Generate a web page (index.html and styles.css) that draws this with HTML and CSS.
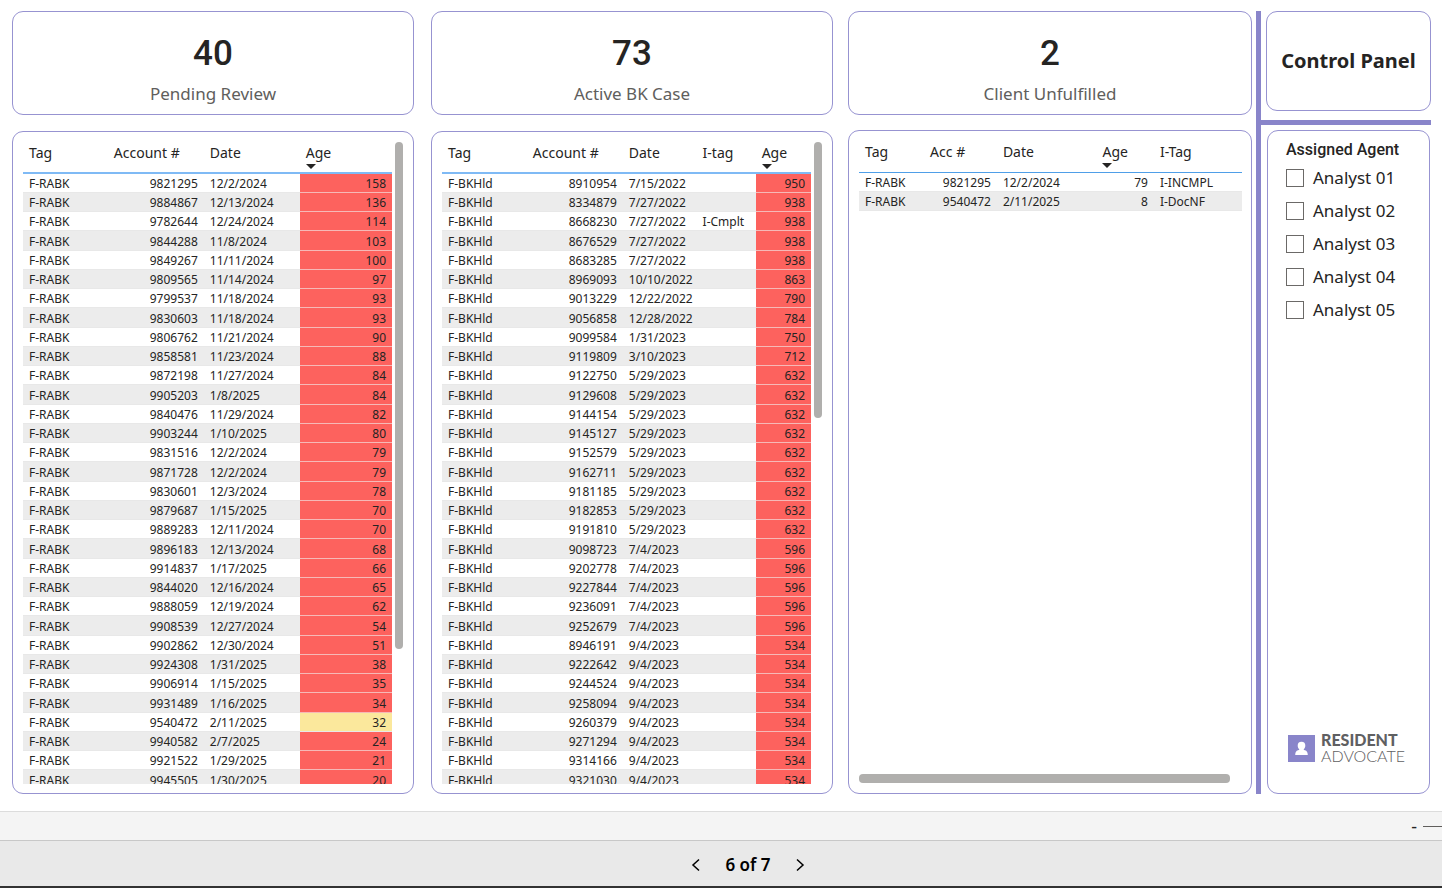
FILE: index.html
```html
<!DOCTYPE html>
<html lang="en">
<head>
<meta charset="utf-8">
<title>Resident Advocate – BK Review</title>
<link rel="stylesheet" href="styles.css">
</head>
<body>
<main class="report">
  <section class="column">
    <div class="card kpi"><div class="kpi-value">40</div><div class="kpi-label">Pending Review</div></div>
    <div class="card panel">
      <div class="table-wrap">
        <table class="grid pending">
          <colgroup><col class="c-tag"><col class="c-acc"><col class="c-date"><col class="c-age"></colgroup>
          <thead><tr><th>Tag</th><th>Account #</th><th>Date</th><th class="sorted">Age</th></tr></thead>
          <tbody id="pending"></tbody>
        </table>
      </div>
      <div class="vscroll"><div class="thumb thumb-long"></div></div>
    </div>
  </section>
  <section class="column">
    <div class="card kpi"><div class="kpi-value">73</div><div class="kpi-label">Active BK Case</div></div>
    <div class="card panel">
      <div class="table-wrap">
        <table class="grid active">
          <colgroup><col class="c-tag"><col class="c-acc"><col class="c-date"><col class="c-itag"><col class="c-age"></colgroup>
          <thead><tr><th>Tag</th><th>Account #</th><th>Date</th><th>I-tag</th><th class="sorted">Age</th></tr></thead>
          <tbody id="active"></tbody>
        </table>
      </div>
      <div class="vscroll"><div class="thumb thumb-short"></div></div>
    </div>
  </section>
  <section class="column">
    <div class="card kpi"><div class="kpi-value">2</div><div class="kpi-label">Client Unfulfilled</div></div>
    <div class="card panel panel-wide">
      <div class="table-wrap">
        <table class="grid client">
          <colgroup><col class="c-tag"><col class="c-acc"><col class="c-date"><col class="c-age"><col class="c-itag"></colgroup>
          <thead><tr><th>Tag</th><th>Acc #</th><th>Date</th><th class="sorted">Age</th><th>I-Tag</th></tr></thead>
          <tbody>
            <tr><td>F-RABK</td><td class="num">9821295</td><td>12/2/2024</td><td class="num">79</td><td>I-INCMPL</td></tr>
            <tr><td>F-RABK</td><td class="num">9540472</td><td>2/11/2025</td><td class="num">8</td><td>I-DocNF</td></tr>
          </tbody>
        </table>
      </div>
      <div class="hscroll"></div>
    </div>
  </section>
  <aside class="sidebar">
    <div class="card title-card"><h1>Control Panel</h1></div>
    <div class="rule"></div>
    <div class="card filters">
      <fieldset>
        <legend>Assigned Agent</legend>
        <label><input type="checkbox">Analyst 01</label>
        <label><input type="checkbox">Analyst 02</label>
        <label><input type="checkbox">Analyst 03</label>
        <label><input type="checkbox">Analyst 04</label>
        <label><input type="checkbox">Analyst 05</label>
      </fieldset>
      <div class="logo">
        <svg width="27" height="27" viewBox="0 0 27 27" aria-hidden="true">
          <rect width="27" height="27" fill="#8985ca"/>
          <path fill="#fff" d="M13.500 6.800a3.800 3.800 0 0 1 3.800 3.900c0 1.600-.7 2.800-1.700 3.500.2.600.7.800 1.400 1.100 1.700.7 2.700 1.700 2.800 4.700H7.200c.1-3 1.100-4 2.800-4.700.7-.3 1.200-.5 1.400-1.100-1-.7-1.700-1.900-1.700-3.500a3.800 3.800 0 0 1 3.800-3.900z"/>
        </svg>
        <div class="logo-text"><strong>RESIDENT</strong><span>ADVOCATE</span></div>
      </div>
    </div>
  </aside>
</main>
<div class="zoom-bar"><button type="button" aria-label="Zoom out">-</button><span class="zoom-track"></span></div>
<nav class="pager">
  <button type="button" aria-label="Previous page"><svg width="10" height="14" viewBox="0 0 10 14"><path d="M8 1.500 2 7l6 5.500"/></svg></button>
  <span>6 of 7</span>
  <button type="button" aria-label="Next page"><svg width="10" height="14" viewBox="0 0 10 14"><path d="M2 1.500 8 7l-6 5.500"/></svg></button>
</nav>
<script src="data.js"></script>
</body>
</html>
```
FILE: styles.css
```css
* { box-sizing: border-box; }

body {
  margin: 0;
  height: 100vh;
  display: flex;
  flex-direction: column;
  overflow: hidden;
  background: #fff;
  color: #252423;
  font-family: "Noto Sans", "Open Sans", sans-serif;
  font-size: 12px;
}

button { border: 0; padding: 0; background: none; color: inherit; font: inherit; }

.report {
  flex: 1;
  min-height: 0;
  display: grid;
  grid-template-columns: 419fr 417fr 404fr 179px;
  grid-template-rows: minmax(0, 1fr);
  padding: 11px 11px 17px 12px;
}

.column { display: flex; flex-direction: column; gap: 16px; min-height: 0; }
.column:nth-child(1) { padding-right: 17px; }
.column:nth-child(2) { padding-right: 15px; }
.column:nth-child(3) { gap: 15px; }

.card { border: 1px solid #9793d1; border-radius: 11px; background: #fff; }

.kpi { height: 104px; flex: none; padding-top: 20px; text-align: center; }
.kpi-value { font: 500 35px/44px Roboto, sans-serif; }
.kpi-label { font-size: 17px; line-height: 36px; color: #605e5c; }

.panel { flex: 1; min-height: 0; display: flex; padding: 10px 10px 9px; }
.panel-wide { flex-direction: column; padding: 10px 9px 10px 10px; }
.table-wrap { flex: 1; min-height: 0; overflow: hidden; }

.grid { width: 100%; table-layout: fixed; border-collapse: separate; border-spacing: 0; }
.grid th {
  height: 32px;
  padding: 0 0 0 6px;
  border-bottom: 2px solid #7fbaf5;
  font-size: 14px;
  line-height: 22px;
  font-weight: 400;
  text-align: left;
  vertical-align: top;
  white-space: nowrap;
}
.grid .sorted::after {
  content: "";
  display: block;
  width: 0;
  border: solid transparent;
  border-width: 5px 5px 0;
  border-top-color: #252423;
}
.grid td {
  height: 19px;
  padding: 2px 6px 0;
  border-bottom: 1px solid #e8e8e8;
  line-height: 16px;
  white-space: nowrap;
}
.grid tr:nth-child(4n) td { height: 20px; }
.grid tr:nth-child(even) td { background: #ececec; }
.grid .num { text-align: right; }
.grid tbody tr .late { background: #fd625e; border-bottom-color: #f6b9b7; }
.grid tbody tr .warn { background: #fbe89c; }

.pending .c-tag { width: 23%; }
.pending .c-acc { width: 26%; }
.pending .c-date { width: 26%; }
.active .c-tag { width: 23%; }
.active .c-acc { width: 26%; }
.active .c-date { width: 20%; }
.active .c-itag { width: 16%; }
.client .c-tag { width: 17%; }
.client .c-acc { width: 19%; }
.client .c-date { width: 26%; }
.client .c-age { width: 15%; }
.client th { border-bottom: 1px solid #4f9fe8; }

.vscroll { width: 8px; margin-left: 3px; }
.thumb { border-radius: 4px; background: #b0afad; }
.thumb-long { height: 79%; }
.thumb-short { height: 43%; }
.hscroll { height: 9px; margin-right: 12px; border-radius: 4px; background: #b0afad; }

.sidebar {
  display: flex;
  flex-direction: column;
  margin-left: 4px;
  border-left: 5px solid #8985ca;
}
.title-card {
  display: flex;
  align-items: center;
  justify-content: center;
  height: 100px;
  margin-left: 5px;
}
.title-card h1 { margin: 0; font-size: 20px; line-height: 28px; white-space: nowrap; }
.rule { height: 5px; margin: 9px 0 5px; background: #8985ca; }
.filters {
  flex: 1;
  display: flex;
  flex-direction: column;
  justify-content: space-between;
  margin: 0 1px 0 6px;
  padding: 9px 18px 29px;
}
fieldset { margin: 0; padding: 0; border: 0; }
legend { padding: 0 0 1px; font: 500 16px/20px Roboto, sans-serif; white-space: nowrap; }
.filters label { display: flex; align-items: center; gap: 9px; height: 33px; font-size: 17px; white-space: nowrap; }
.filters input {
  appearance: none;
  width: 18px;
  height: 18px;
  margin: 0;
  border: 1px solid #6b6967;
  background: #fff;
}

.logo { display: flex; align-items: center; gap: 6px; margin-left: 2px; }
.logo-text { display: flex; flex-direction: column; font: 300 16px/16px Lato, sans-serif; color: #5f6062; }
.logo-text strong { font-weight: 900; }

.zoom-bar {
  display: flex;
  align-items: center;
  justify-content: flex-end;
  gap: 6px;
  height: 29px;
  border-top: 1px solid #dcdcdc;
  background: #f4f4f4;
  font-size: 18px;
}
.zoom-track { width: 19px; height: 1px; background: #605e5c; }

.pager {
  display: flex;
  align-items: center;
  justify-content: center;
  gap: 24px;
  height: 48px;
  padding: 2px 0 0 54px;
  border-top: 1px solid #c8c8c8;
  border-bottom: 2px solid #333;
  background: #e9e9e9;
  color: #000;
  font-size: 17px;
  font-weight: 600;
}
.pager svg { display: block; fill: none; stroke: #000; stroke-width: 1.5; }
```
FILE: data.js
```js
const pending = `9821295 12/2/2024 158
9884867 12/13/2024 136
9782644 12/24/2024 114
9844288 11/8/2024 103
9849267 11/11/2024 100
9809565 11/14/2024 97
9799537 11/18/2024 93
9830603 11/18/2024 93
9806762 11/21/2024 90
9858581 11/23/2024 88
9872198 11/27/2024 84
9905203 1/8/2025 84
9840476 11/29/2024 82
9903244 1/10/2025 80
9831516 12/2/2024 79
9871728 12/2/2024 79
9830601 12/3/2024 78
9879687 1/15/2025 70
9889283 12/11/2024 70
9896183 12/13/2024 68
9914837 1/17/2025 66
9844020 12/16/2024 65
9888059 12/19/2024 62
9908539 12/27/2024 54
9902862 12/30/2024 51
9924308 1/31/2025 38
9906914 1/15/2025 35
9931489 1/16/2025 34
9540472 2/11/2025 32
9940582 2/7/2025 24
9921522 1/29/2025 21
9945505 1/30/2025 20`;

const active = `8910954 7/15/2022 950
8334879 7/27/2022 938
8668230 7/27/2022 938 I-Cmplt
8676529 7/27/2022 938
8683285 7/27/2022 938
8969093 10/10/2022 863
9013229 12/22/2022 790
9056858 12/28/2022 784
9099584 1/31/2023 750
9119809 3/10/2023 712
9122750 5/29/2023 632
9129608 5/29/2023 632
9144154 5/29/2023 632
9145127 5/29/2023 632
9152579 5/29/2023 632
9162711 5/29/2023 632
9181185 5/29/2023 632
9182853 5/29/2023 632
9191810 5/29/2023 632
9098723 7/4/2023 596
9202778 7/4/2023 596
9227844 7/4/2023 596
9236091 7/4/2023 596
9252679 7/4/2023 596
8946191 9/4/2023 534
9222642 9/4/2023 534
9244524 9/4/2023 534
9258094 9/4/2023 534
9260379 9/4/2023 534
9271294 9/4/2023 534
9314166 9/4/2023 534
9321030 9/4/2023 534`;

const parse = text => text.split("\n").map(line => line.split(" "));

document.getElementById("pending").innerHTML = parse(pending).map(([acc, date, age]) =>
  `<tr><td>F-RABK</td><td class="num">${acc}</td><td>${date}</td><td class="num ${acc === "9540472" ? "warn" : "late"}">${age}</td></tr>`
).join("");

document.getElementById("active").innerHTML = parse(active).map(([acc, date, age, tag = ""]) =>
  `<tr><td>F-BKHld</td><td class="num">${acc}</td><td>${date}</td><td>${tag}</td><td class="num late">${age}</td></tr>`
).join("");
```
